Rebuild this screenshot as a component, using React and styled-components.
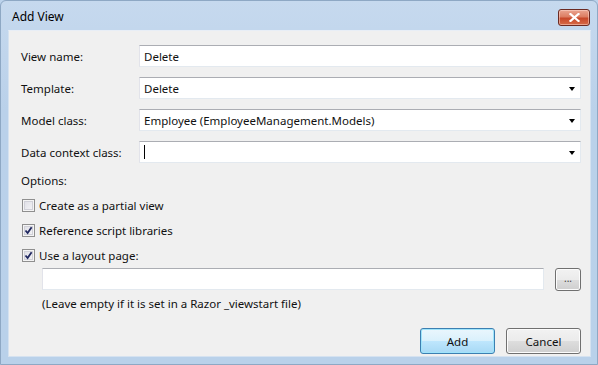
import React from "react";
import styled, { createGlobalStyle } from "styled-components";

const Global = createGlobalStyle`
  html, body { margin: 0; padding: 0; background: #bcd3ec; }
  body { font-family: "Noto Sans", "Segoe UI", sans-serif; font-size: 11.5px; color: #111; }
`;

const Window = styled.div`
  width: 598px;
  height: 365px;
  box-sizing: border-box;
  display: flex;
  flex-direction: column;
  background: linear-gradient(180deg, #c6d9ee 0%, #bad1ea 30%, #b9d1ea 100%);
  border: 1px solid #8ea8c4;
  border-radius: 6px 6px 0 0;
  padding: 0 6px 7px 7px;
`;

const TitleBar = styled.div`
  height: 29px;
  flex: none;
  display: flex;
  align-items: flex-start;
  justify-content: space-between;
`;

const Title = styled.div`
  margin: 7px 0 0 4px;
  font-size: 12px;
  color: #000;
`;

const CloseButton = styled.div`
  margin: 8px 1px 0 0;
  width: 30px;
  height: 15px;
  border: 1px solid #6b2a22;
  border-radius: 3px;
  background: linear-gradient(180deg, #eba591 0%, #dc7d62 45%, #c8482a 55%, #d66b48 100%);
  display: flex;
  align-items: center;
  justify-content: center;
  box-shadow: inset 0 0 0 1px rgba(255, 220, 210, 0.5);
`;

const Client = styled.div`
  flex: 1;
  background: #f0f0f0;
  border: 1px solid #d5e2f0;
  border-top-color: #e8eef6;
  display: flex;
  flex-direction: column;
  padding: 14px 9px 0 12px;
`;

const FieldRow = styled.div`
  display: grid;
  grid-template-columns: 118px 1fr;
  align-items: center;
  height: 22px;
  margin-bottom: ${(p) => p.$gap ?? 10}px;
`;

const Label = styled.div`
  white-space: nowrap;
`;

const TextBox = styled.div`
  position: relative;
  height: 22px;
  box-sizing: border-box;
  background: #fff;
  border: 1px solid #e3e9ef;
  border-top-color: #abadb3;
  border-left-color: #e2e3ea;
  display: flex;
  align-items: center;
  padding: 0 4px;
  width: ${(p) => p.$w || "auto"};
`;

const Caret = styled.span`
  display: inline-block;
  width: 1px;
  height: 14px;
  background: #000;
`;

const Arrow = styled.span`
  position: absolute;
  right: 5px;
  top: 9px;
  width: 0;
  height: 0;
  border-left: 3.5px solid transparent;
  border-right: 3.5px solid transparent;
  border-top: 4px solid #000;
`;

const SectionLabel = styled.div`
  margin-top: 9px;
  height: 16px;
  display: flex;
  align-items: center;
`;

const CheckRow = styled.label`
  display: flex;
  align-items: center;
  gap: 4px;
  height: 16px;
  margin-top: ${(p) => p.$mt ?? 9}px;
  padding-left: 1px;
`;

const Box = styled.span`
  width: 13px;
  height: 13px;
  box-sizing: border-box;
  border: 1px solid #8f8f8f;
  background: linear-gradient(135deg, #dcdce4 0%, #f6f6f8 100%);
  box-shadow: inset 0 0 0 1px #f4f4f4, inset 0 0 0 2px #d0d0d8;
  display: flex;
  align-items: center;
  justify-content: center;
`;

const LayoutRow = styled.div`
  display: flex;
  align-items: center;
  gap: 11px;
  margin: 5px 0 0 21px;
  height: 22px;
`;

const SmallButton = styled.div`
  width: 26px;
  height: 23px;
  box-sizing: border-box;
  border: 1px solid #707070;
  border-radius: 3px;
  background: linear-gradient(180deg, #f2f2f2 0%, #ebebeb 50%, #dddddd 51%, #cfcfcf 100%);
  box-shadow: inset 0 0 0 1px #fcfcfc;
  display: flex;
  align-items: center;
  justify-content: center;
  font-size: 10px;
  color: #444;
  padding-bottom: 3px;
`;

const Hint = styled.div`
  margin: 5px 0 0 21px;
  height: 16px;
  display: flex;
  align-items: center;
`;

const Footer = styled.div`
  display: flex;
  justify-content: flex-end;
  gap: 11px;
  margin-top: 17px;
`;

const Button = styled.div`
  width: 75px;
  height: 26px;
  box-sizing: border-box;
  border: 1px solid ${(p) => (p.$default ? "#3c7fb1" : "#707070")};
  border-radius: 3px;
  background: ${(p) =>
    p.$default
      ? "linear-gradient(180deg, #eaf6fd 0%, #d9f0fc 50%, #bee6fd 51%, #a7d9f5 100%)"
      : "linear-gradient(180deg, #f2f2f2 0%, #ebebeb 50%, #dddddd 51%, #cfcfcf 100%)"};
  box-shadow: inset 0 0 0 1px ${(p) => (p.$default ? "#9fe4fb" : "#fcfcfc")};
  display: flex;
  align-items: center;
  justify-content: center;
`;

const Check = () => (
  <svg width="9" height="9" viewBox="0 0 9 9">
    <path d="M1.5 4.5 L3.6 7 L7.6 1.2" fill="none" stroke="#202860" strokeWidth="1.8" />
  </svg>
);

export default function App() {
  return (
    <>
      <Global />
      <Window>
        <TitleBar>
          <Title>Add View</Title>
          <CloseButton>
            <svg width="11" height="9" viewBox="0 0 11 9">
              <path d="M1.5 1 L9.5 8 M9.5 1 L1.5 8" stroke="#fff" strokeWidth="2.2" strokeLinecap="square" />
            </svg>
          </CloseButton>
        </TitleBar>
        <Client>
          <FieldRow>
            <Label>View name:</Label>
            <TextBox>Delete</TextBox>
          </FieldRow>
          <FieldRow>
            <Label>Template:</Label>
            <TextBox>
              Delete
              <Arrow />
            </TextBox>
          </FieldRow>
          <FieldRow>
            <Label>Model class:</Label>
            <TextBox>
              Employee (EmployeeManagement.Models)
              <Arrow />
            </TextBox>
          </FieldRow>
          <FieldRow $gap={0}>
            <Label>Data context class:</Label>
            <TextBox>
              <Caret />
              <Arrow />
            </TextBox>
          </FieldRow>
          <SectionLabel>Options:</SectionLabel>
          <CheckRow $mt={9}>
            <Box />
            Create as a partial view
          </CheckRow>
          <CheckRow>
            <Box>
              <Check />
            </Box>
            Reference script libraries
          </CheckRow>
          <CheckRow>
            <Box>
              <Check />
            </Box>
            Use a layout page:
          </CheckRow>
          <LayoutRow>
            <TextBox $w="502px" />
            <SmallButton>...</SmallButton>
          </LayoutRow>
          <Hint>(Leave empty if it is set in a Razor _viewstart file)</Hint>
          <Footer>
            <Button $default>Add</Button>
            <Button>Cancel</Button>
          </Footer>
        </Client>
      </Window>
    </>
  );
}
